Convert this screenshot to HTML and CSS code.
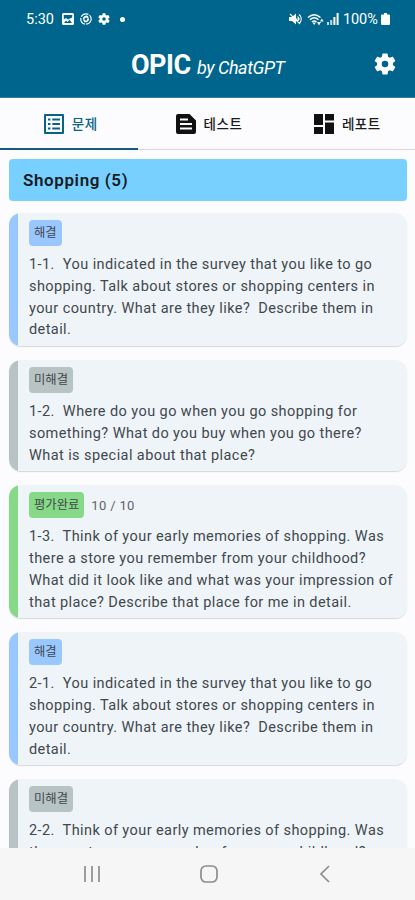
FILE: index.html
```html
<!DOCTYPE html>
<html lang="ko">
<head>
<meta charset="utf-8">
<meta name="viewport" content="width=device-width">
<title>OPIC by ChatGPT</title>
<link rel="stylesheet" href="styles.css">
</head>
<body>
<svg class="defs" aria-hidden="true">
  <symbol id="gear" viewBox="2 2 20 20"><path d="M19.14 12.94c.04-.3.06-.61.06-.94 0-.32-.02-.64-.07-.94l2.03-1.58a.49.49 0 0 0 .12-.61l-1.92-3.32a.49.49 0 0 0-.59-.22l-2.39.96c-.5-.38-1.03-.7-1.62-.94l-.36-2.54a.48.48 0 0 0-.48-.41h-3.84a.47.47 0 0 0-.47.41l-.36 2.54c-.59.24-1.13.57-1.62.94l-2.39-.96a.48.48 0 0 0-.59.22L2.74 8.87a.47.47 0 0 0 .12.61l2.03 1.58c-.05.3-.09.63-.09.94s.02.64.07.94l-2.03 1.58a.49.49 0 0 0-.12.61l1.92 3.32c.12.22.37.29.59.22l2.39-.96c.5.38 1.03.7 1.62.94l.36 2.54c.05.24.24.41.48.41h3.84c.24 0 .44-.17.47-.41l.36-2.54c.59-.24 1.13-.56 1.62-.94l2.39.96c.22.08.47 0 .59-.22l1.92-3.32a.47.47 0 0 0-.12-.61l-2.01-1.58zM12 15a3 3 0 1 1 0-6 3 3 0 0 1 0 6z"/></symbol>
</svg>
<header class="app-header">
  <div class="status">
    <span class="clock">5:30</span>
    <svg class="s-image" viewBox="0 0 12 12"><path fill-rule="evenodd" d="M1.5 0h9A1.5 1.5 0 0 1 12 1.500v9a1.500 1.500 0 0 1-1.500 1.500h-9A1.500 1.500 0 0 1 0 10.500v-9A1.500 1.500 0 0 1 1.500 0zM1.800 2v4.500L4 5l2 1.500 4.200-2V2zM2 10h8L7.500 6.800 5.500 9 4 7.600z"/></svg>
    <svg class="s-swirl" viewBox="0 0 12 12"><g fill="none" stroke="#fff" stroke-width="1.200"><circle cx="6" cy="6" r="5.200" stroke-dasharray="8 1.200"/><circle cx="6" cy="6" r="2.200"/><path d="M3.800 5.800C3.800 3.500 6 2.500 8 3.700M8.200 6c0 2.400-2.200 3.300-4.200 2.200"/></g></svg>
    <svg class="s-gear"><use href="#gear"/></svg>
    <span class="dot"></span>
    <span class="spring"></span>
    <svg class="s-mute" viewBox="0 0 13 12"><path d="M0 4h3l4-3.500v11L3 8H0z"/><path d="M1 1l10 10M8.500 3.500c1.500 1 1.500 3.500 0 5M10 1.500c3 2 3 7 0 9M7 6h4" fill="none" stroke="#fff" stroke-width="1.100"/></svg>
    <svg class="s-wifi" viewBox="0 0 17 13"><path d="M1 4.500q6-5.500 12.500 0M3 6.800q4.200-4 8.500 0M5 9q2.200-2 4.500 0" fill="none" stroke="#fff" stroke-width="1.500"/><path d="M5.500 9.500h3.500L7.200 12zM10 9h4l-2 3.500zM13 8.500l1.800-3 1.800 3z"/></svg>
    <svg class="s-signal" viewBox="0 0 12 12"><path d="M0 9h2v3H0zM3.200 7h2v5h-2z" opacity=".75"/><path d="M6.400 4h2v8h-2zM9.600 0h2v12h-2z"/></svg>
    <span class="percent">100%</span>
    <svg class="s-battery" viewBox="0 0 9 12"><path d="M3 0h3v1.500h2a1 1 0 0 1 1 1V11a1 1 0 0 1-1 1H1a1 1 0 0 1-1-1V2.500a1 1 0 0 1 1-1h2z"/></svg>
  </div>
  <div class="title-row">
    <h1><b>OPIC</b><i>by ChatGPT</i></h1>
    <svg class="settings"><use href="#gear"/></svg>
  </div>
</header>
<nav class="tabs">
  <div class="tab active">
    <svg viewBox="0 0 20 20"><path fill-rule="evenodd" d="M1 0h18a1 1 0 0 1 1 1v18a1 1 0 0 1-1 1H1a1 1 0 0 1-1-1V1a1 1 0 0 1 1-1zM2 2v16h16V2zM4 4.500h2.400v2H4zm4.300 0H16v2H8.300zM4 9h2.400v2H4zm4.300 0H16v2H8.300zM4 13.500h2.400v2H4zm4.300 0H16v2H8.300z"/></svg>
    <span>문제</span>
  </div>
  <div class="tab">
    <svg viewBox="0 0 20 20"><path fill-rule="evenodd" d="M2 0h11.500L20 6.500V18a2 2 0 0 1-2 2H2a2 2 0 0 1-2-2V2a2 2 0 0 1 2-2zM4 4.500v2h8v-2zM4 9v2h12V9zM4 13.500v2h12v-2z"/></svg>
    <span>테스트</span>
  </div>
  <div class="tab">
    <svg viewBox="0 0 20 20"><path d="M0 0h9v11H0zM11 0h9v6.500h-9zM0 13h9v7H0zM11 8.500h9V20h-9z"/></svg>
    <span>레포트</span>
  </div>
</nav>
<main>
  <h2>Shopping (5)</h2>
  <article class="card solved">
    <div class="meta"><span class="badge">해결</span></div>
    <p>1-1.  You indicated in the survey that you like to go
shopping. Talk about stores or shopping centers in
your country. What are they like?  Describe them in
detail.</p>
  </article>
  <article class="card unsolved">
    <div class="meta"><span class="badge">미해결</span></div>
    <p>1-2.  Where do you go when you go shopping for
something? What do you buy when you go there?
What is special about that place?</p>
  </article>
  <article class="card rated">
    <div class="meta"><span class="badge">평가완료</span><span class="score">10 / 10</span></div>
    <p>1-3.  Think of your early memories of shopping. Was
there a store you remember from your childhood?
What did it look like and what was your impression of
that place? Describe that place for me in detail.</p>
  </article>
  <article class="card solved">
    <div class="meta"><span class="badge">해결</span></div>
    <p>2-1.  You indicated in the survey that you like to go
shopping. Talk about stores or shopping centers in
your country. What are they like?  Describe them in
detail.</p>
  </article>
  <article class="card unsolved">
    <div class="meta"><span class="badge">미해결</span></div>
    <p>2-2.  Think of your early memories of shopping. Was
there a store you remember from your childhood?</p>
  </article>
</main>
<footer class="system-nav">
  <svg viewBox="0 0 18 18"><path d="M2 1v16M9 1v16M16 1v16"/></svg>
  <svg viewBox="0 0 18 18"><rect x="1" y="1" width="16" height="16" rx="5"/></svg>
  <svg viewBox="0 0 18 18"><path d="M13 1L5 9l8 8"/></svg>
</footer>
</body>
</html>
```
FILE: styles.css
```css
* { box-sizing: border-box; }
body {
  margin: 0;
  height: 900px;
  display: flex;
  flex-direction: column;
  overflow: hidden;
  background: #fcfcff;
  color: #191c1e;
  font-family: Roboto, "Noto Sans CJK KR", sans-serif;
}
svg { display: block; flex: none; }
.defs { width: 0; height: 0; position: absolute; }

.app-header { flex: none; height: 98px; background: #00658d; color: #fff; fill: #fff; border-bottom: 1px solid #337f9f; }
.status { height: 38px; padding: 0 25px 0 26px; display: flex; align-items: center; font-size: 14.5px; }
.clock { width: 36px; }
.percent { width: 37px; letter-spacing: -.1px; margin-left: 4px; }
.spring { flex: 1; }
.s-image, .s-swirl, .s-gear { width: 12px; height: 12px; margin-right: 6px; }
.dot { width: 5px; height: 5px; border-radius: 50%; background: #fff; margin-left: 4px; }
.s-mute { width: 13px; height: 12px; }
.s-wifi { width: 17px; height: 13px; margin-left: 5px; }
.s-signal { width: 12px; height: 12px; margin-left: 3px; }
.s-battery { width: 9px; height: 12px; margin-left: 1px; }
.title-row { height: 59px; padding: 0 19px 0 131px; display: flex; align-items: center; justify-content: space-between; }
h1 { margin: -2px 0 0; display: flex; align-items: baseline; font-size: 27px; line-height: 32px; font-weight: 400; }
h1 b { width: 66px; font-weight: 700; letter-spacing: -.5px; }
h1 i { font-size: 18px; letter-spacing: -.45px; }
.settings { width: 22px; height: 22px; margin-top: -8px; }

.tabs { flex: none; height: 52px; display: grid; grid-template-columns: repeat(3, 1fr); border-bottom: 1px solid #ddd5dc; }
.tab { height: 52px; display: flex; align-items: center; justify-content: center; gap: 8px; padding-left: 3px; font-size: 13.500px; letter-spacing: .5px; font-weight: 500; border-bottom: 2px solid transparent; }
.tab svg { width: 20px; height: 20px; margin-top: 2px; fill: #111; }
.tab.active { color: #086487; border-color: #175981; }
.tab.active svg { fill: #086487; }

main { flex: 1; min-height: 0; overflow: hidden; padding: 9px 8px 0 9px; }
h2 { margin: 0 0 12.500px; height: 41.500px; padding-left: 14px; border-radius: 4px; background: #77d0ff; font-size: 17px; line-height: 43px; font-weight: 600; letter-spacing: .6px; }
.card { margin-bottom: 14px; padding: 7px 0 5px 20px; border-radius: 12px; background: linear-gradient(to right, var(--tone) 9px, #eff4f8 9px); box-shadow: 0 1px 1px #d3d7da; }
.solved { --tone: #99c7ff; }
.unsolved { --tone: #b8c3c3; }
.rated { --tone: #86d986; }
.meta { display: flex; align-items: center; gap: 7px; height: 26px; }
.badge { height: 26px; padding: 0 5px; border-radius: 4px; background: var(--tone); color: #41484d; font-size: 12.300px; line-height: 27px; }
.score { color: #5d6469; font-size: 13px; letter-spacing: .35px; }
.card p { margin: 8px 0 0; white-space: pre; color: #41484d; font-size: 14.500px; line-height: 21.750px; letter-spacing: .42px; }

.system-nav { flex: none; height: 52px; background: #f6f6f6; display: grid; grid-template-columns: repeat(3, 116.500px); justify-content: center; justify-items: center; align-items: center; padding-left: 2px; }
.system-nav svg { width: 18px; height: 18px; fill: none; stroke: #8d8d8d; stroke-width: 1.700; }
```
